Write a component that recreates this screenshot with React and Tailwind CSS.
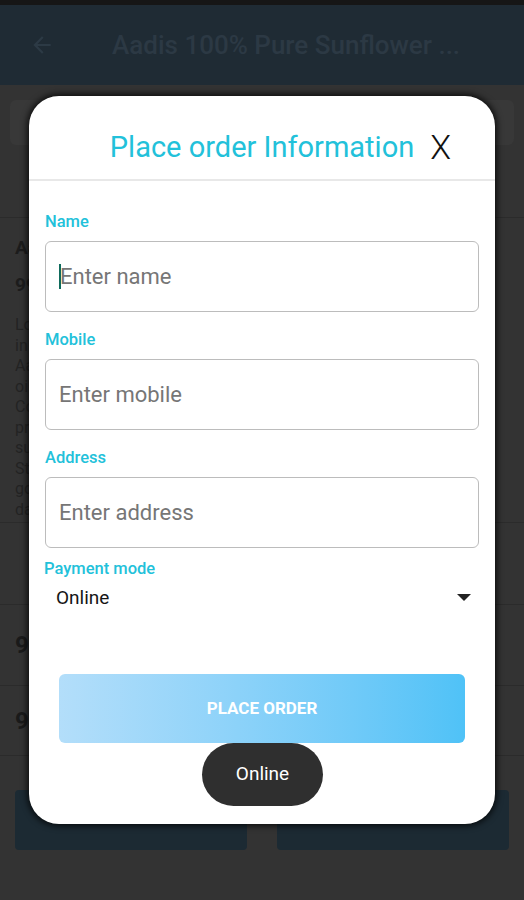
import React from "react";

const paragraph = [
  "Looking for the best cooking oil for your family kitchen",
  "in the daily meals, here is a healthy light choice for",
  "Aadis 100% Pure Sunflower Oil is cold pressed from",
  "oil seeds of the finest quality and filtered naturally",
  "Cold pressing keeps the natural vitamins and taste",
  "present in the seeds and keeps the oil light and clear",
  "suitable for frying, baking and everyday cooking needs",
  "Store in a cool dry place away from direct sunlight for",
  "good shelf life. Best before twelve months from the",
  "date of packing. Keep the lid tightly closed after use",
];

function Field({ label, placeholder, cursor }) {
  return (
    <div className="flex flex-col">
      <div className="text-[16.5px] leading-[20px] font-medium text-[#22c1da]">{label}</div>
      <div className="mt-[9px] h-[71px] rounded-[6px] border border-[#bcbcbc] flex items-center px-[13px]">
        {cursor && <span className="w-[2px] h-[25px] bg-[#0f6b5c] -mr-[1px]" />}
        <span className="text-[22px] text-[#767676]">{placeholder}</span>
      </div>
    </div>
  );
}

function Background() {
  return (
    <div className="flex flex-col h-full bg-[#333333]">
      <div className="h-[5px] bg-[#161616]" />
      <div className="h-[80px] bg-[#1f2b34] flex items-center">
        <svg width="26" height="26" viewBox="0 0 24 24" className="ml-[29px]">
          <path d="M20 11H7.83l5.59-5.59L12 4l-8 8 8 8 1.41-1.41L7.83 13H20v-2z" fill="#2c3a45" />
        </svg>
        <div className="ml-[57px] text-[26px] font-medium text-[#2c3944] whitespace-nowrap overflow-hidden w-[370px]">
          Aadis 100% Pure Sunflower ...
        </div>
      </div>
      <div className="h-[133px] px-[10px] pt-[15px] border-b border-[#2b2b2b]">
        <div className="h-[45px] rounded-[6px] bg-[#383838]" />
      </div>
      <div className="px-[15px] pt-[17px] text-[#1c1c1c]">
        <div className="text-[19px] font-bold leading-[26px]">Aadis 100% Pure Sunflower Oil 1 Litre</div>
        <div className="text-[19px] font-bold leading-[26px] mt-[11px]">99.00</div>
        <div className="mt-[17px] text-[16px] leading-[20.5px] text-[#232323]">
          {paragraph.map((l) => (
            <div key={l} className="whitespace-nowrap overflow-hidden">{l}</div>
          ))}
        </div>
      </div>
      <div className="mt-[2px] h-[83px] border-y border-[#2b2b2b]" />
      <div className="h-[81px] flex items-center px-[15px] text-[24px] font-bold text-[#1a1a1a] border-b border-[#2b2b2b]">99</div>
      <div className="h-[70px] flex items-center px-[15px] text-[24px] font-bold text-[#1a1a1a] border-b border-[#2b2b2b]">99</div>
      <div className="mt-[34px] px-[15px] grid grid-cols-2 gap-[30px]">
        <div className="h-[60px] rounded-[4px] bg-[#1c2a33]" />
        <div className="h-[60px] rounded-[4px] bg-[#1c2a33]" />
      </div>
    </div>
  );
}

export default function App() {
  return (
    <div className="relative w-full h-[900px] overflow-hidden" style={{ fontFamily: "Roboto, 'Noto Sans', sans-serif" }}>
      <Background />
      <div className="absolute left-[29px] top-[96px] w-[466px] h-[728px] bg-white rounded-[30px] shadow-[0_0_6px_2px_rgba(0,0,0,0.75)] flex flex-col">
        <div className="relative h-[85px] border-b-2 border-[#e8e8e8] flex justify-center pt-[34px]">
          <div className="text-[29px] leading-[34px] text-[#22c1da]">Place order Information</div>
          <div className="absolute right-[44px] top-[31px] text-[34px] leading-[40px] font-light text-[#111]">X</div>
        </div>
        <div className="px-[16px] pt-[31px] flex flex-col gap-[18px]">
          <Field label="Name" placeholder="Enter name" cursor />
          <Field label="Mobile" placeholder="Enter mobile" />
          <Field label="Address" placeholder="Enter address" />
        </div>
        <div className="px-[15px] mt-[11px]">
          <div className="text-[16.5px] leading-[20px] font-medium text-[#22c1da]">Payment mode</div>
          <div className="mt-[7px] flex items-center justify-between pl-[12px] pr-[9px] h-[24px]">
            <span className="text-[19px] text-[#151515]">Online</span>
            <svg width="14" height="8" viewBox="0 0 14 8">
              <path d="M0 0h14L7 7z" fill="#222" />
            </svg>
          </div>
        </div>
        <div className="px-[30px] mt-[64px]">
          <div className="h-[69px] rounded-[6px] bg-gradient-to-r from-[#b3defa] to-[#4fc2f7] flex items-center justify-center text-white font-bold text-[17px]">
            PLACE ORDER
          </div>
        </div>
      </div>
      <div className="absolute left-[202px] top-[743px] w-[121px] h-[63px] rounded-full bg-[#2f2f2f] flex items-center justify-center text-white text-[19px]">
        Online
      </div>
    </div>
  );
}
